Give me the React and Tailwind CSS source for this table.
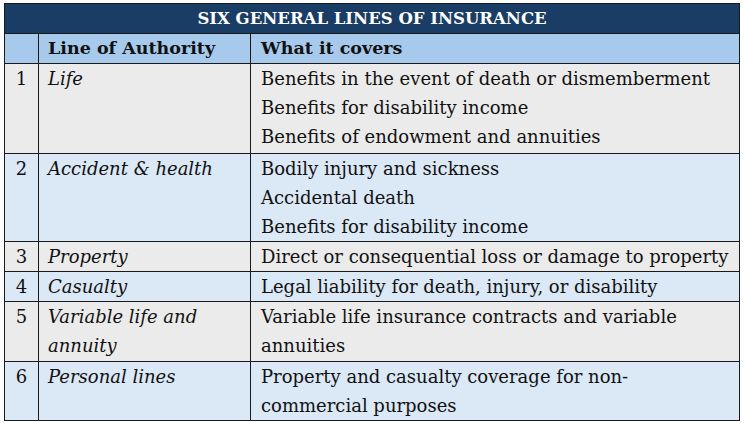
import React from 'react'

const rows = [
  { n: '1', line: ['Life'], covers: ['Benefits in the event of death or dismemberment', 'Benefits for disability income', 'Benefits of endowment and annuities'], tone: 'bg-[#ebebeb]', pad: 'pb-[2px]' },
  { n: '2', line: ['Accident & health'], covers: ['Bodily injury and sickness', 'Accidental death', 'Benefits for disability income'], tone: 'bg-[#dbe8f6]', pad: '' },
  { n: '3', line: ['Property'], covers: ['Direct or consequential loss or damage to property'], tone: 'bg-[#ebebeb]', pad: '' },
  { n: '4', line: ['Casualty'], covers: ['Legal liability for death, injury, or disability'], tone: 'bg-[#dbe8f6]', pad: '' },
  { n: '5', line: ['Variable life and', 'annuity'], covers: ['Variable life insurance contracts and variable', 'annuities'], tone: 'bg-[#ebebeb]', pad: 'pb-px' },
  { n: '6', line: ['Personal lines'], covers: ['Property and casualty coverage for non-', 'commercial purposes'], tone: 'bg-[#dbe8f6]', pad: '' },
]

export default function App() {
  return (
    <div className="w-[746px] h-[423px] bg-white pl-[4px] pt-[3px] font-['DejaVu_Serif',serif] text-[18px] text-[#111]">
      <table className="w-[736px] border-collapse table-fixed">
        <colgroup>
          <col className="w-[34px]" />
          <col className="w-[212px]" />
          <col />
        </colgroup>
        <thead>
          <tr className="h-[30px] bg-[#193d64]">
            <th colSpan={3} className="border border-[#1a1a1a] text-center text-white font-bold text-[16.5px] leading-[29px]">
              SIX GENERAL LINES OF INSURANCE
            </th>
          </tr>
          <tr className="h-[30px] bg-[#a7caec]">
            <th className="border border-[#1a1a1a]" />
            <th className="border border-[#1a1a1a] text-left font-bold text-[17.5px] pl-[9px] leading-[29px]">Line of Authority</th>
            <th className="border border-[#1a1a1a] text-left font-bold text-[17.5px] pl-[10px] leading-[29px]">What it covers</th>
          </tr>
        </thead>
        <tbody>
          {rows.map((r) => (
            <tr key={r.n} className={r.tone}>
              <td className={`border border-[#1a1a1a] align-top text-center leading-[29px] ${r.pad}`}>{r.n}</td>
              <td className={`border border-[#1a1a1a] align-top italic pl-[9px] leading-[29px] ${r.pad}`}>
                {r.line.map((t) => <div key={t}>{t}</div>)}
              </td>
              <td className={`border border-[#1a1a1a] align-top pl-[10px] leading-[29px] ${r.pad}`}>
                {r.covers.map((t) => <div key={t}>{t}</div>)}
              </td>
            </tr>
          ))}
        </tbody>
      </table>
    </div>
  )
}
